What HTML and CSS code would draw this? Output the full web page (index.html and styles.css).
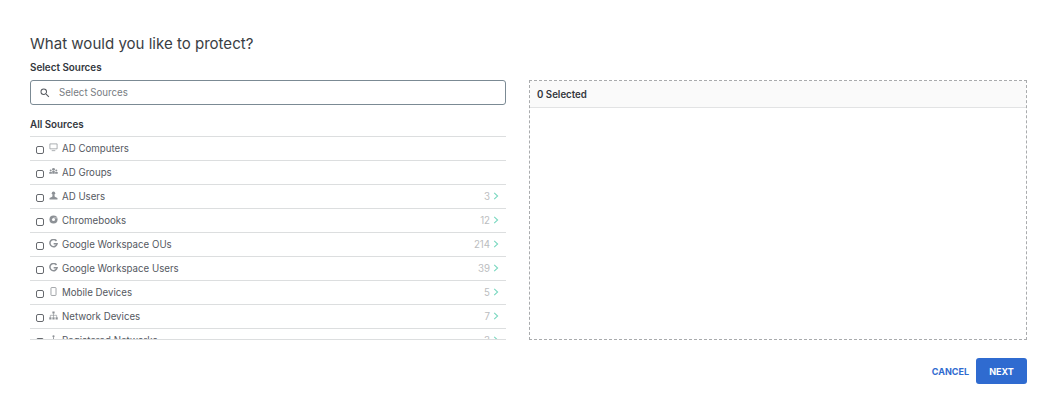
FILE: index.html
```html
<!DOCTYPE html>
<html lang="en">
<head>
<meta charset="utf-8">
<title>What would you like to protect?</title>
<link rel="stylesheet" href="styles.css">
</head>
<body>
<main class="dialog">
  <h1 class="title">What would you like to protect?</h1>
  <div class="columns">
    <section class="left">
      <div class="label">Select Sources</div>
      <div class="search">
        <svg class="search-icon" viewBox="0 0 24 24" width="12" height="12"><path d="M15.500 14h-.79l-.28-.27A6.471 6.471 0 0 0 16 9.500 6.500 6.500 0 1 0 9.500 16c1.610 0 3.090-.59 4.230-1.570l.27.28v.79l5 4.990L20.490 19l-4.990-5zm-6 0C7.010 14 5 11.990 5 9.500S7.010 5 9.500 5 14 7.010 14 9.500 11.990 14 9.500 14z"/></svg>
        <input class="search-input" type="text" placeholder="Select Sources">
      </div>
      <div class="all-label">All Sources</div>
      <ul class="list">
        <li class="row"><input class="check" type="checkbox">
          <svg class="ico" viewBox="0 0 10 10"><path d="M1 1h8v5.500H1z M3 8.500h4" fill="none" stroke="currentColor" stroke-width=".8"/></svg>
          <span class="name">AD Computers</span></li>
        <li class="row"><input class="check" type="checkbox">
          <svg class="ico" viewBox="0 0 10 10"><circle cx="5" cy="2.600" r="1.600"/><circle cx="1.900" cy="3.800" r="1.100"/><circle cx="8.100" cy="3.800" r="1.100"/><path d="M0.300 7.500V5.500h2.900v2zM3.600 7.500V4.500h2.800v3zM6.800 7.500V5.500h2.900v2z"/></svg>
          <span class="name">AD Groups</span></li>
        <li class="row"><input class="check" type="checkbox">
          <svg class="ico" viewBox="0 0 10 10"><circle cx="5" cy="2.500" r="1.900"/><path d="M4 4h2l.4 2.500 3 1.300v1.700H.6V7.800l3-1.300z"/></svg>
          <span class="name">AD Users</span><span class="count">3</span><svg class="chev" viewBox="0 0 6 8"><path d="M1.200 .8 4.600 4 1.200 7.200" fill="none" stroke="currentColor" stroke-width="1.100"/></svg></li>
        <li class="row"><input class="check" type="checkbox">
          <svg class="ico" viewBox="0 0 10 10"><circle cx="5" cy="5" r="4.500"/><circle cx="5" cy="5" r="1.700" fill="#fff"/><path d="M5 3.200h4" stroke="#fff" stroke-width=".6"/></svg>
          <span class="name">Chromebooks</span><span class="count">12</span><svg class="chev" viewBox="0 0 6 8"><path d="M1.200 .8 4.600 4 1.200 7.200" fill="none" stroke="currentColor" stroke-width="1.100"/></svg></li>
        <li class="row"><input class="check" type="checkbox">
          <svg class="ico" viewBox="0 0 10 10"><path d="M8.300 2.200A4 4 0 1 0 9 5.200H5.200" fill="none" stroke="currentColor" stroke-width="1.700"/></svg>
          <span class="name">Google Workspace OUs</span><span class="count">214</span><svg class="chev" viewBox="0 0 6 8"><path d="M1.200 .8 4.600 4 1.200 7.200" fill="none" stroke="currentColor" stroke-width="1.100"/></svg></li>
        <li class="row"><input class="check" type="checkbox">
          <svg class="ico" viewBox="0 0 10 10"><path d="M8.300 2.200A4 4 0 1 0 9 5.200H5.200" fill="none" stroke="currentColor" stroke-width="1.700"/></svg>
          <span class="name">Google Workspace Users</span><span class="count">39</span><svg class="chev" viewBox="0 0 6 8"><path d="M1.200 .8 4.600 4 1.200 7.200" fill="none" stroke="currentColor" stroke-width="1.100"/></svg></li>
        <li class="row"><input class="check" type="checkbox">
          <svg class="ico" viewBox="0 0 10 10"><rect x="2.200" y=".6" width="5.600" height="8.800" rx=".7" fill="none" stroke="currentColor" stroke-width=".9"/></svg>
          <span class="name">Mobile Devices</span><span class="count">5</span><svg class="chev" viewBox="0 0 6 8"><path d="M1.200 .8 4.600 4 1.200 7.200" fill="none" stroke="currentColor" stroke-width="1.100"/></svg></li>
        <li class="row"><input class="check" type="checkbox">
          <svg class="ico" viewBox="0 0 10 10"><path d="M3.800 .5h2.400v2.400H3.800zM.3 7h2.400v2.500H.3zM3.800 7h2.400v2.500H3.800zM7.300 7h2.400v2.500H7.300z"/><path d="M5 2.500V7M1.500 7V4.800h7V7" fill="none" stroke="currentColor" stroke-width=".7"/></svg>
          <span class="name">Network Devices</span><span class="count">7</span><svg class="chev" viewBox="0 0 6 8"><path d="M1.200 .8 4.600 4 1.200 7.200" fill="none" stroke="currentColor" stroke-width="1.100"/></svg></li>
        <li class="row"><input class="check" type="checkbox">
          <svg class="ico" viewBox="0 0 10 10"><circle cx="5" cy="1.500" r="1.200"/><path d="M5 2.500v5M1 8.500h8" fill="none" stroke="currentColor" stroke-width="1"/></svg>
          <span class="name">Registered Networks</span><span class="count">3</span><svg class="chev" viewBox="0 0 6 8"><path d="M1.200 .8 4.600 4 1.200 7.200" fill="none" stroke="currentColor" stroke-width="1.100"/></svg></li>
      </ul>
    </section>
    <section class="panel">
      <header class="panel-head">0 Selected</header>
    </section>
  </div>
  <footer class="actions">
    <button class="btn-text" type="button">CANCEL</button>
    <button class="btn-primary" type="button">NEXT</button>
  </footer>
</main>
</body>
</html>
```
FILE: styles.css
```css
* { box-sizing: border-box; }
html, body { margin: 0; height: 100%; background: #fff; }
body { font-family: Inter, "Liberation Sans", sans-serif; color: #33373d; overflow: hidden; }
.dialog { width: 1052px; height: 406px; padding: 34px 25px 0 30px; display: flex; flex-direction: column; }
.title { margin: 0; font-size: 15.050px; line-height: 19px; font-weight: 400; color: #3a3e44; }
.columns { display: flex; gap: 23px; margin-top: 4px; height: 283px; }
.left { width: 476px; display: flex; flex-direction: column; }
.label { font-size: 9.900px; line-height: 20px; font-weight: 600; color: #33373d; }
.search { margin-top: 3px; height: 25px; border: 1px solid #7b8a94; border-radius: 3px; display: flex; align-items: center; padding-left: 8px; gap: 8px; }
.search-icon { fill: #55595f; flex: none; }
.search-input { border: 0; outline: 0; padding: 0; flex: 1; font: 400 9.700px Inter, "Liberation Sans", sans-serif; color: #33373d; background: transparent; }
.search-input::placeholder { color: #777c82; opacity: 1; }
.all-label { margin-top: 11px; font-size: 9.800px; line-height: 18px; font-weight: 600; color: #33373d; height: 20px; }
.list { list-style: none; margin: 0; padding: 0; flex: 1; min-height: 0; overflow: hidden; border-bottom: 1px solid #dcdedf; }
.row { height: 24px; border-top: 1px solid #dcdedf; display: flex; align-items: center; padding: 0 7px 0 5px; font-size: 9.700px; color: #55595f; }
.check { appearance: none; width: 8px; height: 8px; margin: 2px 0 0 1px; border: 1px solid #66696e; border-radius: 2px; background: #fff; flex: none; }
.ico { width: 9px; height: 9px; margin: -2px 0 0 5px; fill: currentColor; color: #8d9196; flex: none; }
.name { margin-left: 4px; margin-top: -1px; flex: 1; }
.count { color: #bbbdc0; margin-top: -1px; }
.chev { width: 6px; height: 8px; margin: -1px 0 0 3px; color: #7ad8c0; flex: none; }
.panel { flex: 1; border: 1px dashed #a9abad; margin-top: 23px; height: 260px; }
.panel-head { height: 27px; background: #fafafa; border-bottom: 1px solid #e2e3e4; padding-left: 7px; font-size: 9.700px; font-weight: 600; line-height: 27px; color: #33373d; }
.actions { display: flex; justify-content: flex-end; align-items: center; gap: 7px; margin-top: 18px; }
.btn-text { border: 0; background: none; padding: 0; font: 700 9px Inter, "Liberation Sans", sans-serif; color: #2f6bd0; }
.btn-primary { border: 0; width: 51px; height: 26px; border-radius: 3px; background: #2f6bd0; color: #fff; font: 700 9px Inter, "Liberation Sans", sans-serif; }
```
